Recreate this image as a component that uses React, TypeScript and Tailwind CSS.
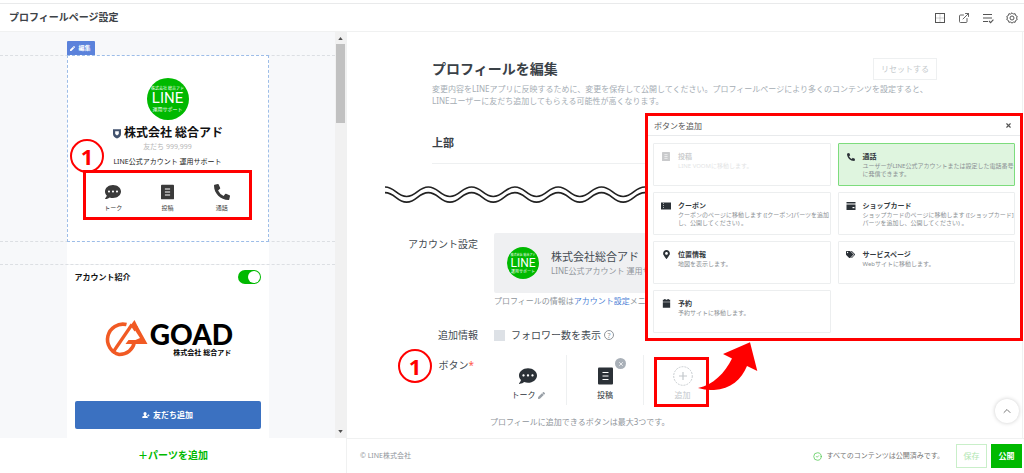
import { ReactNode } from 'react';
import { ChevronUp, CircleCheck, ExternalLink, X } from 'lucide-react';
import { FaCommentDots, FaMapMarkerAlt, FaPen, FaPhoneAlt, FaTags } from 'react-icons/fa';

interface IconProps {
    className?: string;
}

const GridIcon = ({ className }: IconProps) => (
    <svg viewBox="0 0 12 12" className={className} fill="none" stroke="currentColor">
        <rect x="1.5" y="1.5" width="9" height="9" strokeWidth="1" />
        <path d="M6 2.500v7M2.500 6h7" strokeWidth=".9" strokeDasharray="1 1" opacity=".6" />
    </svg>
);

const ListCheckIcon = ({ className }: IconProps) => (
    <svg viewBox="0 0 12 12" className={className} fill="none" stroke="currentColor" strokeWidth="1.1">
        <path d="M1 2.5h9M1 6h9M1 9.5h5M7 9l1.6 1.6L11.4 7.6" />
    </svg>
);

const GearIcon = ({ className }: IconProps) => (
    <svg viewBox="0 0 24 24" className={className} fill="none" stroke="currentColor" strokeWidth="2">
        <path d="M12 1.5l2.6 2.6 3.6-.7 1 3.6 3.3 1.9-1.4 3.1 1.4 3.1-3.3 1.9-1 3.6-3.6-.7-2.6 2.6-2.6-2.6-3.6.7-1-3.6-3.3-1.9 1.4-3.1-1.4-3.1 3.3-1.9 1-3.6 3.6.7z" />
        <circle cx="12" cy="12" r="4" />
    </svg>
);

const PostIcon = ({ className }: IconProps) => (
    <svg viewBox="0 0 15 17" className={className}>
        <rect width="15" height="17" rx="1" fill="currentColor" />
        <path d="M4.5 5h6M4.5 8.5h6M4.5 12h6" stroke="#fff" strokeWidth="1.2" />
    </svg>
);

const CouponIcon = ({ className }: IconProps) => (
    <svg viewBox="0 0 12 10" className={className}>
        <path d="M1 1.500h10v7H1z" fill="currentColor" />
        <path d="M3.500 2v6" stroke="#fff" strokeWidth=".6" strokeDasharray="1 1" />
    </svg>
);

const CardIcon = ({ className }: IconProps) => (
    <svg viewBox="0 0 12 10" className={className}>
        <path d="M1.5 1h9v1.6h-9zM1.5 3.4h9V9h-9z" fill="currentColor" />
        <path d="M7.5 6h2v1.2h-2z" fill="#fff" />
    </svg>
);

const CalendarIcon = ({ className }: IconProps) => (
    <svg viewBox="0 0 12 12" className={className}>
        <path d="M2 2h1.5V1H5v1h2V1h1.5v1H10v8.5H2zM2 4v.6h8V4z" fill="currentColor" fillRule="evenodd" />
    </svg>
);

const ShieldIcon = ({ className }: IconProps) => (
    <svg viewBox="0 0 10 11" className={className}>
        <path d="M1 1.2h8v4.8c0 2-1.6 3.6-4 4.6C2.6 9.6 1 8 1 6z" fill="#42526e" />
        <path d="M3.2 3.2h3.6V6L5 7.600 3.200 6z" fill="#fff" />
    </svg>
);

const AddFriendIcon = ({ className }: IconProps) => (
    <svg viewBox="0 0 10 9" className={className} fill="currentColor">
        <path d="M3.8.8a2 2 0 0 1 2 2c0 1-.5 1.7-1 2v.7l2.4 1v1.7H.4V6.500l2.400-1v-.7c-.5-.3-1-1-1-2a2 2 0 0 1 2-2zM7.500 3.500h.8v1h1v.8h-1v1h-.8v-1h-1v-.8h1z" />
    </svg>
);

const GoadMark = () => (
    <svg viewBox="0 0 46 38" className="w-[46px] h-[38px] shrink-0" fill="none">
        <path d="M24.500 4.600A15.300 15.300 0 1 0 17.300 34.500C25 34.500 31 29.500 32.300 22.500" stroke="#f15a24" strokeWidth="3.600" />
        <path d="M10.500 33L30 4.500" stroke="#f15a24" strokeWidth="3.200" />
        <path d="M32.500 0L36 7 32.500 11.500 28.500 5.500z" fill="#f15a24" />
        <path d="M35.500 6L45.500 24H23.500L26.500 20H33.500L38 18 32.800 10z" fill="#f15a24" />
    </svg>
);

const Wave = () => {
    const d = 'M0 2c10 0 11.6 9.5 21.65 9.5S33.3 2 43.3 2s11.6 9.5 21.65 9.5S76.6 2 86.6 2s11.6 9.5 21.65 9.5S119.9 2 129.9 2s11.6 9.5 21.65 9.5S163.2 2 173.2 2s11.6 9.5 21.65 9.5S206.5 2 216.5 2s11.6 9.5 21.65 9.5S249.8 2 259.8 2s11.6 9.5 21.65 9.5';
    return (
        <svg viewBox="0 0 280 20" className="block w-[280px] h-5" fill="none" stroke="#222" strokeWidth="1.6">
            <path d={d} />
            <path d={d} transform="translate(0 5.6)" />
        </svg>
    );
};

const Avatar = ({ large = false }: { large?: boolean }) => (
    <div
        className={`flex flex-col items-center justify-center rounded-full bg-[#00b900] text-white whitespace-nowrap overflow-hidden shrink-0 ${
            large ? 'size-[42px]' : 'size-8'
        }`}
    >
        <span className={large ? 'text-[4px] leading-[5px]' : 'text-[3px] leading-[4px]'}>株式会社 総合アド</span>
        <span className={`font-[Roboto] ${large ? 'text-[15px] leading-[15px]' : 'text-[12px] leading-[12px]'}`}>LINE</span>
        <span className={large ? 'text-[5px] leading-[6px]' : 'text-[4px] leading-[5px]'}>運用サポート</span>
    </div>
);

const StepMark = ({ className }: IconProps) => (
    <span
        className={`absolute flex items-center justify-center size-[34px] rounded-full border-2 border-[#f00] bg-white text-[#f00] text-[22px] leading-none font-bold ${className}`}
    >
        1
    </span>
);

const previewButtons = [
    { label: 'トーク', icon: <FaCommentDots className="size-4" /> },
    { label: '投稿', icon: <PostIcon className="w-[13px] h-4" /> },
    { label: '通話', icon: <FaPhoneAlt className="size-4" /> },
];

interface Option {
    title: string;
    lines: string[];
    icon: ReactNode;
    state?: 'disabled' | 'selected';
}

const options: Option[] = [
    { title: '投稿', lines: ['LINE VOOMに移動します。'], icon: <PostIcon className="w-2 h-[9px]" />, state: 'disabled' },
    {
        title: '通話',
        lines: ['ユーザーがLINE公式アカウントまたは設定した電話番号', 'に発信できます。'],
        icon: <FaPhoneAlt className="size-2" />,
        state: 'selected',
    },
    {
        title: 'クーポン',
        lines: ['クーポンのページに移動します ([クーポン]パーツを追加', 'し、公開してください) 。'],
        icon: <CouponIcon className="w-3 h-[10px]" />,
    },
    {
        title: 'ショップカード',
        lines: ['ショップカードのページに移動します ([ショップカード]', 'パーツを追加し、公開してください) 。'],
        icon: <CardIcon className="w-3 h-[10px]" />,
    },
    { title: '位置情報', lines: ['地図を表示します。'], icon: <FaMapMarkerAlt className="size-[9px]" /> },
    { title: 'サービスページ', lines: ['Webサイトに移動します。'], icon: <FaTags className="size-[9px]" /> },
    { title: '予約', lines: ['予約サイトに移動します。'], icon: <CalendarIcon className="size-[11px]" /> },
];

const optionStyles = {
    normal: 'border-[#eceeef] bg-white',
    disabled: 'border-[#eceeef] bg-white',
    selected: 'border-[#7ddc7d] bg-[#dff5df]',
};

const AddButtonDialog = () => (
    <div role="dialog" aria-label="ボタンを追加" className="absolute top-[81px] right-px w-[378px] border-[3px] border-[#f00] bg-white">
        <div className="flex items-center justify-between h-5 pl-[6px] pr-2 border-b border-[#e8eaec]">
            <h2 className="text-[8px] text-[#555]">ボタンを追加</h2>
            <button aria-label="閉じる" className="text-[#555]">
                <X className="size-[7px]" strokeWidth={4} />
            </button>
        </div>
        <div className="grid grid-cols-2 gap-x-[7px] gap-y-[6px] px-[5px] pt-[7px] pb-[5px]">
            {options.map(option => (
                <button
                    key={option.title}
                    disabled={option.state === 'disabled'}
                    className={`min-h-[43px] pt-[7px] border rounded-[1px] text-left whitespace-nowrap ${optionStyles[option.state ?? 'normal']}`}
                >
                    <span className={`flex items-start h-full ${option.state === 'disabled' ? 'opacity-25' : ''}`}>
                        <span className="flex items-center justify-center w-6 pr-[0px] h-[11px] text-[#2b3137] shrink-0">{option.icon}</span>
                        <span>
                            <span className="block text-[7px] leading-[11px] font-bold text-[#333a40]">{option.title}</span>
                            {option.lines.map(line => (
                                <span key={line} className="block text-[6px] leading-[8px] text-[#8b9094]">
                                    {line}
                                </span>
                            ))}
                        </span>
                    </span>
                </button>
            ))}
        </div>
    </div>
);

const Preview = () => (
    <aside className="flex flex-col w-[347px] shrink-0 border-r border-[#f0f1f1]">
        <div className="flex flex-1 min-h-0">
            <div className="flex flex-col flex-1 min-w-0 bg-[#f7f8fa] overflow-hidden">
                <div className="w-[202px] mx-auto pt-[9px]">
                    <button className="flex items-center justify-center gap-[3px] w-7 h-[14px] bg-[#5b82db] text-white text-[6px] font-bold rounded-t-[1px]">
                        <FaPen className="size-[5px]" />
                        編集
                    </button>
                </div>

                {/* Profile */}
                <section className="border-y border-dashed border-[#dcdfe3]">
                    <div className="flex flex-col items-center w-[202px] mx-auto -my-px pt-[22px] pb-[21px] border border-dashed border-[#9dbde8] bg-white">
                        <Avatar large />
                        <h2 className="flex items-center gap-[2px] mt-[5px] text-[12px] leading-4 font-bold text-[#111]">
                            <ShieldIcon className="w-[10px] h-[11px]" />
                            株式会社 総合アド
                        </h2>
                        <p className="text-[7px] leading-3 text-[#b7b7b7]">友だち 999,999</p>
                        <p className="mt-[3px] text-[7px] leading-3 text-[#222]">LINE公式アカウント 運用サポート</p>
                        <div className="relative mt-[2px]">
                            <StepMark className="-top-[31px] -left-[13px]" />
                            <div className="relative grid grid-cols-3 w-[169px] h-[50px] border-[3px] border-[#f00] bg-white">
                                {previewButtons.map(button => (
                                    <button key={button.label} className="flex flex-col items-center pt-[11px] gap-1 text-[#3a3a3a]">
                                        {button.icon}
                                        <span className="text-[6px] leading-[8px]">{button.label}</span>
                                    </button>
                                ))}
                            </div>
                        </div>
                    </div>
                </section>
                <div className="w-[202px] h-[22px] mx-auto shrink-0 bg-white" />

                {/* Introduction */}
                <section className="flex-1 border-t border-dashed border-[#dcdfe3]">
                    <div className="w-[202px] h-full mx-auto px-2 pt-[5px] bg-white">
                        <label className="flex items-center justify-between text-[8px] leading-[14px] font-bold text-[#111]">
                            アカウント紹介
                            <input type="checkbox" role="switch" defaultChecked className="peer sr-only" />
                            <span className="flex justify-end w-[23px] h-[14px] p-px rounded-full bg-[#00b900]">
                                <span className="size-3 rounded-full bg-white" />
                            </span>
                        </label>
                        <div className="flex items-start justify-center gap-[2px] h-[117px] pt-9">
                            <GoadMark />
                            <div className="flex flex-col items-end text-black whitespace-nowrap">
                                <span className="font-[Lato] font-black text-[28px] leading-[28px]">GOAD</span>
                                <span className="pr-[2px] text-[7px] leading-[9px] font-bold">株式会社 総合アド</span>
                            </div>
                        </div>
                        <button className="flex items-center justify-center gap-[3px] w-full h-7 rounded-[2px] bg-[#3b71c1] text-white text-[8px] font-bold">
                            <AddFriendIcon className="w-2 h-2" />
                            友だち追加
                        </button>
                    </div>
                </section>
            </div>

            {/* Scrollbar */}
            <div className="flex flex-col items-center w-[11px] pt-[5px] pb-[5px] bg-[#f1f1f1]">
                <svg viewBox="0 0 6 4" className="w-[5px] h-[3px]"><path d="M0 4l3-4 3 4z" fill="#505050" /></svg>
                <div className="w-[9px] h-[79px] mt-1 bg-[#c1c1c1]" />
                <svg viewBox="0 0 6 4" className="w-[5px] h-[3px] mt-auto"><path d="M0 0l3 4 3-4z" fill="#505050" /></svg>
            </div>
        </div>
        <button className="h-[35px] shrink-0 text-[10px] font-bold text-[#00b900]">＋パーツを追加</button>
    </aside>
);

const Editor = () => (
    <main className="relative flex flex-col flex-1 min-w-0 text-[#444b52]">
        <div className="relative flex-1 min-h-0 overflow-hidden mr-px border-r border-[#f0f1f1]">
            <div className="px-[85px] pt-[26px]">
                <div className="flex items-center justify-between h-[21px]">
                    <h1 className="text-[14px] font-bold text-[#3a4147]">プロフィールを編集</h1>
                    <button className="w-16 h-[22px] border border-[#eef0f1] text-[8px] text-[#c5cacd]">リセットする</button>
                </div>
                <p className="mt-1 text-[8px] leading-[12px] text-[#a5adb4] whitespace-nowrap">
                    変更内容をLINEアプリに反映するために、変更を保存して公開してください。プロフィールページにより多くのコンテンツを設定すると、
                    <br />
                    LINEユーザーに友だち追加してもらえる可能性が高くなります。
                </p>
                <h2 className="mt-7 pb-3 border-b border-[#eef0f1] text-[11px] leading-4 font-bold text-[#3a4147]">上部</h2>
            </div>
            <div className="mt-[21px] ml-[38px]">
                <Wave />
            </div>

            <div className="grid grid-cols-[131px_1fr] gap-x-4 mt-7 pr-[85px] text-[10px] leading-[14px]">
                <div className="text-right pt-1">アカウント設定</div>
                <div>
                    <div className="flex items-center gap-3 h-[60px] pl-[13px] rounded-[2px] bg-[#eff0f2] whitespace-nowrap">
                        <Avatar />
                        <div>
                            <p className="text-[11px] leading-4">株式会社総合アド</p>
                            <p className="text-[8px] leading-[12px] text-[#8f959b]">LINE公式アカウント 運用サポート</p>
                        </div>
                    </div>
                    <p className="mt-[2px] text-[8px] leading-[12px] text-[#8f959b]">
                        プロフィールの情報は<a href="#account" className="text-[#4d7fd6]">アカウント設定</a>メニュー
                    </p>
                </div>

                <div className="text-right mt-[21px]">追加情報</div>
                <div className="flex items-center gap-[6px] mt-[21px]">
                    <input id="followers" type="checkbox" className="appearance-none size-[11px] bg-[#dde1e6]" />
                    <label htmlFor="followers">フォロワー数を表示</label>
                    <span className="flex items-center justify-center size-[10px] -ml-[3px] rounded-full border border-[#8f959b] text-[7px] leading-none text-[#8f959b]">?</span>
                </div>

                <div className="relative text-right mt-4 pr-1">
                    <StepMark className="-top-[9px] left-[51px]" />
                    ボタン<span className="text-[#ff5c4d]">*</span>
                </div>
                <div className="mt-[13px] -ml-1">
                    <div className="grid grid-cols-[77px_77px_77px] h-[50px] text-[8px] leading-[10px] text-[#2b3137]">
                        <button className="flex flex-col items-center pt-3 gap-[5px] border-r border-[#eef0f1]">
                            <FaCommentDots className="size-[18px]" />
                            <span className="flex items-center gap-[2px]">
                                トーク
                                <FaPen className="size-[7px] text-[#9aa1a8]" />
                            </span>
                        </button>
                        <div className="relative flex border-r border-[#eef0f1]">
                            <button className="flex flex-col flex-1 items-center pt-3 gap-[5px]">
                                <PostIcon className="w-[15px] h-[18px]" />
                                投稿
                            </button>
                            <button aria-label="削除" className="absolute top-[3px] right-[17px] flex items-center justify-center size-[11px] rounded-full bg-[#a9b0b8] text-white">
                                <X className="size-[6px]" strokeWidth={3} />
                            </button>
                        </div>
                        <div className="relative">
                            <button className="flex flex-col items-center w-full pt-[11px] gap-1 text-[#c3c8cc]">
                                <svg viewBox="0 0 20 20" className="size-5" fill="none" stroke="currentColor">
                                    <circle cx="10" cy="10" r="9.3" strokeWidth=".9" strokeDasharray="2 1" />
                                    <path d="M10 6v8M6 10h8" strokeWidth="1.2" />
                                </svg>
                                追加
                            </button>
                            <span className="absolute top-[2px] left-[10px] w-[55px] h-[50px] border-[3px] border-[#f00]" />
                            <svg viewBox="0 0 60 48" className="absolute -top-[13px] left-[54px] w-[60px] h-12" fill="#f00">
                                <path d="M0 46C15 43 27 31 34 16.500L25 12 52 .3 59.300 29 49 24C42 41 26 53 0 46z" />
                            </svg>
                        </div>
                    </div>
                    <p className="mt-[11px] text-[8px] leading-[12px] text-[#8f959b]">プロフィールに追加できるボタンは最大3つです。</p>
                </div>
            </div>
        </div>

        <AddButtonDialog />
        <button aria-label="トップへ戻る" className="absolute bottom-[50px] right-[5px] flex items-center justify-center size-6 rounded-full bg-white shadow-[0_0_4px_rgba(0,0,0,0.2)] text-[#777]">
            <ChevronUp className="size-3" />
        </button>

        <footer className="flex items-center h-[35px] shrink-0 pl-[13px] pr-[2px] border-t border-[#f0f1f1] text-[7px] text-[#8f959b]">
            <span>© LINE株式会社</span>
            <span className="flex items-center gap-1 ml-auto">
                <CircleCheck className="size-[9px] text-[#4fc84f]" />
                <span className="text-[#777]">すべてのコンテンツは公開済みです。</span>
            </span>
            <button className="w-[31px] h-6 ml-3 border border-[#c9efc9] text-[8px] text-[#b0e6b0]">保存</button>
            <button className="w-[31px] h-6 ml-1 bg-[#00b900] text-[8px] font-bold text-white">公開</button>
        </footer>
    </main>
);

const App = () => {
    return (
        <div className="flex flex-col h-screen bg-white font-['Noto_Sans','Noto_Sans_CJK_JP',sans-serif]">
            <header className="flex items-center justify-between h-7 mt-[3px] pl-[9px] pr-[6px] shrink-0 border-t border-[#e9eaeb] shadow-[0_1px_0_#f0f1f1]">
                <h1 className="text-[10px] font-bold text-[#3d4247]">プロフィールページ設定</h1>
                <nav className="flex items-center gap-3 text-[#555]">
                    <button aria-label="レイアウト"><GridIcon className="block size-3" /></button>
                    <button aria-label="新しいタブで開く"><ExternalLink className="block size-3" strokeWidth={1.8} /></button>
                    <button aria-label="並べ替え"><ListCheckIcon className="block size-3" /></button>
                    <button aria-label="設定"><GearIcon className="block size-3" /></button>
                </nav>
            </header>
            <div className="flex flex-1 min-h-0 mt-px">
                <Preview />
                <Editor />
            </div>
        </div>
    );
};

export default App;
